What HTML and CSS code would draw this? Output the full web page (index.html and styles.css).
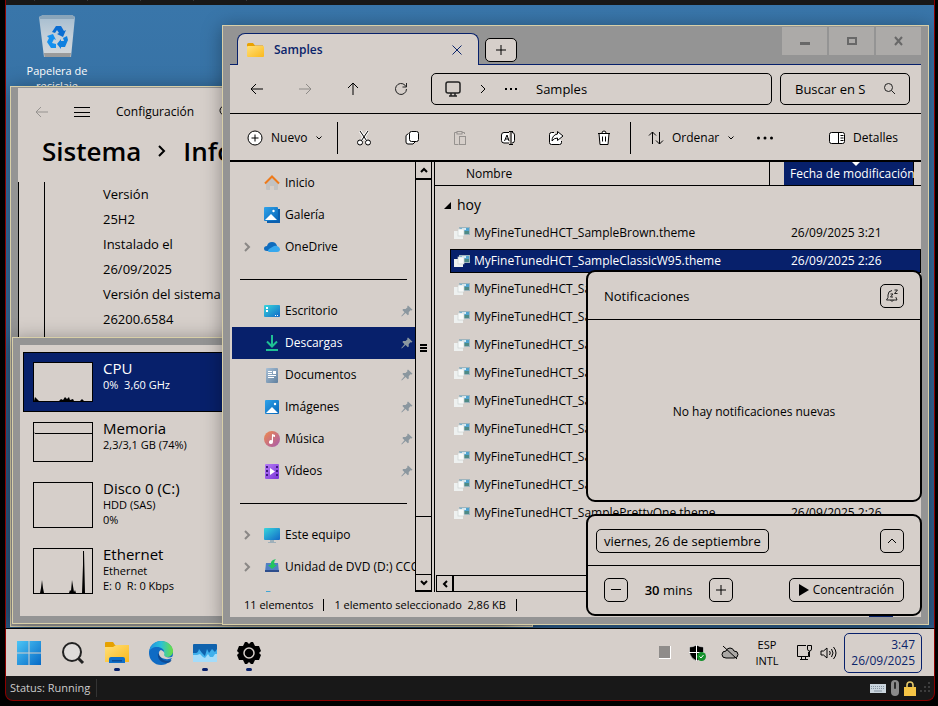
FILE: index.html
```html
<!DOCTYPE html>
<html lang="es">
<head>
    <meta charset="UTF-8">
    <meta name="viewport" content="width=device-width, initial-scale=1.0">
    <title>Escritorio</title>
    <link rel="stylesheet" href="styles.css">
</head>
<body>
    <!-- Shared icons -->
    <svg class="defs" width="0" height="0">
        <defs>
            <symbol id="chev-right" viewBox="0 0 8 12"><path d="M2 2l4 4-4 4" fill="none" stroke="currentColor" stroke-width="2"/></symbol>
            <symbol id="chev-down" viewBox="0 0 8 8"><path d="M1.500 2.500L4 5l2.500-2.500" fill="none" stroke="currentColor"/></symbol>
            <symbol id="pin" viewBox="0 0 12 12"><path d="M7 .5l4.500 4.200-1 .8-1-.2-1.800 2 .1 2.200-1 .8-2.200-2.200L.8 11.500l-.5-.4 3.200-3.900L1.400 5l.8-1 2.400.1L6.500 2.300 6.200 1.200z" fill="#8b979f"/></symbol>
            <symbol id="theme" viewBox="0 0 16 14">
                <rect x="5" y="1" width="11" height="8" fill="#9db4bd"/>
                <rect x="6" y="2" width="9" height="3" fill="#4fa3cf"/>
                <rect x="6" y="5" width="9" height="3" fill="#4d8a86"/>
                <path d="M8 2h4v2H8z" fill="#d3ecf7"/>
                <rect x="0" y="5" width="9" height="8" fill="#eef1f0"/>
                <rect x="4" y="3" width="6" height="7" fill="#f8faf9" stroke="#ccd2d2" stroke-width=".7"/>
            </symbol>
            <linearGradient id="gBlue" x1="0" y1="0" x2="1" y2="1"><stop offset="0" stop-color="#2fa3ea"/><stop offset="1" stop-color="#0765b8"/></linearGradient>
            <linearGradient id="gCyan" x1="0" y1="0" x2="1" y2="1"><stop offset="0" stop-color="#37d6dc"/><stop offset="1" stop-color="#1268c8"/></linearGradient>
            <linearGradient id="gFolder" x1="0" y1="0" x2="1" y2="1"><stop offset="0" stop-color="#ffe07a"/><stop offset="1" stop-color="#fbb91c"/></linearGradient>
            <linearGradient id="gWin" x1="0" y1="0" x2="1" y2="1"><stop offset="0" stop-color="#4cc5f5"/><stop offset="1" stop-color="#0669c6"/></linearGradient>
            <linearGradient id="gMusic" x1="0" y1="0" x2="1" y2="1"><stop offset="0" stop-color="#f08a4b"/><stop offset="1" stop-color="#a65bb0"/></linearGradient>
            <linearGradient id="gVideo" x1="0" y1="0" x2="1" y2="1"><stop offset="0" stop-color="#b57bf5"/><stop offset="1" stop-color="#7a35d8"/></linearGradient>
            <linearGradient id="gDoc" x1="0" y1="0" x2="1" y2="1"><stop offset="0" stop-color="#a9c0d6"/><stop offset="1" stop-color="#5f7f9e"/></linearGradient>
            <linearGradient id="gBin" x1="0" y1="0" x2="0" y2="1"><stop offset="0" stop-color="#a4bccf"/><stop offset=".5" stop-color="#c3cfd9"/><stop offset="1" stop-color="#d4d7da"/></linearGradient>
            <linearGradient id="gEdge" x1="0" y1="0" x2="1" y2="0"><stop offset="0" stop-color="#1d8fe0"/><stop offset=".5" stop-color="#2bc0d8"/><stop offset="1" stop-color="#6be03f"/></linearGradient>
        </defs>
    </svg>

    <div class="viewer">
        <div class="viewer-top"><i></i><i></i><i></i><i></i><i></i></div>

        <main class="desktop">
            <div class="desktop-icon">
                <svg width="38" height="44" viewBox="0 0 38 44">
                    <path d="M1 3l4-2h29l3 2-4 40H6z" fill="url(#gBin)"/>
                    <path d="M1 3l4-2h29l3 2-1 2H2z" fill="#8aa5ba"/>
                    <path d="M6 39h27l-.5 4H6.500z" fill="#9b9b9b"/>
                    <path d="M14 18l4-6h5l3 5 2-1-3 7-6-3 2-1-2-3-2 3z" fill="#0a6dd2"/>
                    <path d="M9 22l6-2 3 6-2-1-2 4 4 1v4h-5l-4-6 2-4z" fill="#1590ef"/>
                    <path d="M25 24l4-2 1 4-3 7h-4v2l-4-5 4-5v2h3z" fill="#0f80e0"/>
                </svg>
                <span>Papelera de reciclaje</span>
            </div>

            <!-- Settings -->
            <section class="window win-settings">
                <div class="settings-bar">
                    <button class="flat" aria-label="Atrás"><svg width="14" height="12" viewBox="0 0 14 12" fill="none" stroke="#969390"><path d="M13 6H1M6 1L1 6l5 5"/></svg></button>
                    <button class="flat" aria-label="Menú"><svg width="16" height="12" viewBox="0 0 16 12" stroke="#000"><path d="M0 1.500h16M0 6.500h16M0 10.500h16"/></svg></button>
                    <span>Configuración</span>
                    <button class="flat settings-search" aria-label="Buscar"><svg width="14" height="14" viewBox="0 0 14 14" fill="none" stroke="#000"><circle cx="5.500" cy="5.500" r="4.500"/><path d="M9 9l4 4"/></svg></button>
                </div>
                <h1 class="crumbs"><span>Sistema</span><svg width="10" height="14" viewBox="0 0 10 14" fill="none" stroke="#000" stroke-width="2"><path d="M2 2l5 5-5 5"/></svg><span>Información</span></h1>
                <div class="spec-card">
                    <dl>
                        <dt>Versión</dt><dd>25H2</dd>
                        <dt>Instalado el</dt><dd>26/09/2025</dd>
                        <dt>Versión del sistema</dt><dd>26200.6584</dd>
                    </dl>
                </div>
            </section>

            <!-- Task manager -->
            <section class="window win-tasks">
                <ul class="perf">
                    <li class="on">
                        <svg width="60" height="40" viewBox="0 0 60 40"><rect x=".5" y=".5" width="59" height="39"/><path class="ink" d="M1 39l1-4 2 2 2 2h20l2-2 2 1 2-3 2 2 2-2 1 3 3-1 1 2h6l2-2 2 2z"/></svg>
                        <div><b>CPU</b><span>0%&nbsp; 3,60 GHz</span></div>
                    </li>
                    <li>
                        <svg width="60" height="40" viewBox="0 0 60 40"><rect x=".5" y=".5" width="59" height="39"/><path d="M1 10.500l1 1h57"/></svg>
                        <div><b>Memoria</b><span>2,3/3,1 GB (74%)</span></div>
                    </li>
                    <li>
                        <svg width="60" height="46" viewBox="0 0 60 46"><rect x=".5" y=".5" width="59" height="45"/></svg>
                        <div><b>Disco 0 (C:)</b><span>HDD (SAS)</span><span>0%</span></div>
                    </li>
                    <li>
                        <svg width="60" height="46" viewBox="0 0 60 46"><rect x=".5" y=".5" width="59" height="45"/><path class="ink" d="M7 45l1-5 1-8 1 8 1 5zM36 45l1-3 1 1 1-11 2 12 1-2 1 3zM49 45l1-28V3h1l1 42z"/></svg>
                        <div><b>Ethernet</b><span>Ethernet</span><span>E: 0&nbsp; R: 0 Kbps</span></div>
                    </li>
                </ul>
            </section>

            <!-- File explorer -->
            <section class="window win-explorer">
                <header class="titlebar">
                    <div class="tab">
                        <svg width="17" height="14" viewBox="0 0 17 14"><path d="M0 1.500Q0 0 1.500 0H6l2 2.500H16V6H0z" fill="#e9a100"/><rect y="3" width="17" height="11" rx="1" fill="url(#gFolder)"/></svg>
                        <strong>Samples</strong>
                        <button class="flat" aria-label="Cerrar pestaña"><svg width="10" height="10" viewBox="0 0 10 10" stroke="#0a246a"><path d="M.5.5l9 9M9.500.5l-9 9"/></svg></button>
                    </div>
                    <button class="new-tab" aria-label="Nueva pestaña"><svg width="10" height="10" viewBox="0 0 10 10" stroke="#000"><path d="M5 0v10M0 5h10"/></svg></button>
                    <div class="caption-buttons">
                        <button aria-label="Minimizar"><svg width="12" height="10" viewBox="0 0 12 10"><path d="M1 6h10v3H1z" fill="#686868"/></svg></button>
                        <button aria-label="Maximizar"><svg width="12" height="10" viewBox="0 0 12 10"><rect x="2" y="2" width="8" height="6" fill="none" stroke="#686868" stroke-width="2"/></svg></button>
                        <button aria-label="Cerrar"><svg width="12" height="10" viewBox="0 0 12 10"><path d="M2 1l7 8M9 1L2 9" stroke="#686868" stroke-width="2"/></svg></button>
                    </div>
                </header>

                <nav class="navbar">
                    <button class="nav-btn" aria-label="Atrás"><svg width="14" height="12" viewBox="0 0 14 12" fill="none" stroke="#000"><path d="M13 6H1M6 1L1 6l5 5"/></svg></button>
                    <button class="nav-btn" aria-label="Adelante"><svg width="14" height="12" viewBox="0 0 14 12" fill="none" stroke="#8d8a87"><path d="M1 6h12M8 1l5 5-5 5"/></svg></button>
                    <button class="nav-btn" aria-label="Subir"><svg width="12" height="14" viewBox="0 0 12 14" fill="none" stroke="#000"><path d="M6 13V1M1 6l5-5 5 5"/></svg></button>
                    <button class="nav-btn" aria-label="Actualizar"><svg width="14" height="14" viewBox="0 0 14 14" fill="none" stroke="#222"><path d="M12.500 7A5.500 5.500 0 1 1 11 3.200L12.500 5M12.500 1v4h-4"/></svg></button>
                    <div class="address">
                        <svg width="16" height="16" viewBox="0 0 16 16" fill="none" stroke="#222" stroke-width="1.500"><rect x="1" y="1" width="14" height="11" rx="2"/><path d="M4 15h8M6 12v3M10 12v3"/></svg>
                        <svg width="6" height="10" viewBox="0 0 6 10" fill="none" stroke="#000"><path d="M1 1l4 4-4 4"/></svg>
                        <svg width="12" height="3" viewBox="0 0 12 3"><path d="M0 0h2v2H0zM5 0h2v2H5zM10 0h2v2h-2z"/></svg>
                        <a href="#">Samples</a>
                    </div>
                    <label class="search">
                        <input type="text" value="Buscar en S" aria-label="Buscar en Samples">
                        <svg width="12" height="12" viewBox="0 0 12 12" fill="none" stroke="#222"><circle cx="4.500" cy="4.500" r="4"/><path d="M7.500 7.500L11 11"/></svg>
                    </label>
                </nav>

                <div class="commands">
                    <button class="cmd cmd-new">
                        <svg width="16" height="16" viewBox="0 0 16 16" fill="#fff" stroke="#000"><circle cx="8" cy="8" r="7"/><path d="M8 4.500v7M4.500 8h7"/></svg>
                        Nuevo
                        <svg width="8" height="8"><use href="#chev-down"/></svg>
                    </button>
                    <i class="sep"></i>
                    <button class="cmd-icon" aria-label="Cortar"><svg width="16" height="16" viewBox="0 0 16 16" fill="#fff" stroke="#000"><path d="M4 1l6.500 9.500M12 1L5.500 10.500" stroke="#fff" stroke-width="3"/><path d="M4 1l6.500 9.500M12 1L5.500 10.500"/><circle cx="4" cy="12.500" r="2.500"/><circle cx="12" cy="12.500" r="2.500"/></svg></button>
                    <button class="cmd-icon" aria-label="Copiar"><svg width="16" height="16" viewBox="0 0 16 16" fill="#fff" stroke="#000"><path d="M4.500 3.500L2 5.500V12q0 2 2 2h5l2-2"/><rect x="5.500" y="1.500" width="9" height="10" rx="2"/></svg></button>
                    <button class="cmd-icon" aria-label="Pegar"><svg width="16" height="16" viewBox="0 0 16 16" fill="none" stroke="#96928f"><path d="M6.500 14.500h-4v-12H5M10 2.500h2.500V4"/><rect x="5" y="1.500" width="5" height="2.500"/><rect x="7.500" y="6.500" width="6" height="8"/></svg></button>
                    <button class="cmd-icon" aria-label="Cambiar nombre"><svg width="16" height="16" viewBox="0 0 16 16" fill="#fff" stroke="#000"><path d="M9 2.500H4q-2.500 0-2.500 2.500v5.500Q1.500 13 4 13h5M12 2.500q2.500 0 2.500 2.500v5.500q0 2.500-2.500 2.500"/><path d="M4.500 11l2.500-6 2 6M5.500 9h3M9 1.500h4M9 14.500h4M11 1.500v13" fill="none"/></svg></button>
                    <button class="cmd-icon" aria-label="Compartir"><svg width="16" height="16" viewBox="0 0 16 16" fill="#fff" stroke="#000"><path d="M6 2.500H3.500q-2 0-2 2v8q0 2 2 2h8q2 0 2-2V11"/><path d="M9.500 1.500L15 6l-5.500 4.500V8Q6 8 4 11q0-6 5.500-7z"/></svg></button>
                    <button class="cmd-icon" aria-label="Eliminar"><svg width="16" height="16" viewBox="0 0 16 16" fill="#fff" stroke="#000"><path d="M3 3.500l1 11h8l1-11M2 3.500h12M6 3q0-2 2-2t2 2M6.500 6.500v5M9.500 6.500v5"/></svg></button>
                    <i class="sep"></i>
                    <button class="cmd cmd-sort">
                        <svg width="16" height="14" viewBox="0 0 16 14" fill="none" stroke="#000"><path d="M4.500 13V1M1 4.500L4.500 1 8 4.500M11.500 1v12M8 9.500l3.500 3.500L15 9.500"/></svg>
                        Ordenar
                        <svg width="8" height="8"><use href="#chev-down"/></svg>
                    </button>
                    <button class="cmd-more" aria-label="Más"><svg width="18" height="4" viewBox="0 0 18 4"><circle cx="2.500" cy="2" r="1.500"/><circle cx="9" cy="2" r="1.500"/><circle cx="15.500" cy="2" r="1.500"/></svg></button>
                    <button class="cmd cmd-details">
                        <svg width="16" height="14" viewBox="0 0 16 14" fill="#fff" stroke="#000"><rect x=".5" y="1.500" width="15" height="11" rx="2"/><path d="M9.500 1.500v11M11.500 4.500h3M11.500 7h3M11.500 9.500h3"/></svg>
                        Detalles
                    </button>
                </div>

                <div class="panes">
                    <ul class="tree">
                        <li><i class="tw"></i><svg width="16" height="16" viewBox="0 0 16 16"><path d="M2 8l6-6 6 6v6q0 1-1 1h-3v-4H6v4H3q-1 0-1-1z" fill="#c2c2c2"/><path d="M1 8.500l7-7 7 7" fill="none" stroke="#ee7a1a" stroke-width="2"/></svg><span>Inicio</span></li>
                        <li><i class="tw"></i><svg width="16" height="16" viewBox="0 0 16 16"><path d="M3 2h13v14H3z" fill="#0b5fae"/><rect width="14" height="14" rx="1" fill="url(#gBlue)"/><path d="M1 13l6-6 6 6z" fill="#fff"/><circle cx="9.500" cy="4" r="1.200" fill="#fff"/></svg><span>Galería</span></li>
                        <li><svg class="tw" width="8" height="12"><use href="#chev-right"/></svg><svg width="16" height="16" viewBox="0 0 16 16"><path d="M3 7q1-4 5-4t5 4l-6 5H3q-3 0-3-2.500T3 7z" fill="#0f6cbd"/><path d="M5 13q-2-1 0-3l5-3q4-1 6 3 0 3-3 3z" fill="#36a8ee"/></svg><span>OneDrive</span></li>
                        <li class="rule"><hr></li>
                        <li><i class="tw"></i><svg width="16" height="16" viewBox="0 0 16 16"><rect y="2" width="16" height="12" rx="1" fill="url(#gCyan)"/><path d="M2 4h2v2H2zM2 7h2v2H2zM11 12h1v1h-1zM13 12h1v1h-1z" fill="#fff"/></svg><span>Escritorio</span><svg class="pin" width="12" height="12"><use href="#pin"/></svg></li>
                        <li class="on"><i class="tw"></i><svg width="16" height="16" viewBox="0 0 16 16" fill="none" stroke="#1fbf94" stroke-width="2"><path d="M8 0v11M3 6.500l5 5 5-5M2 15h12"/></svg><span>Descargas</span><svg class="pin" width="12" height="12"><use href="#pin"/></svg></li>
                        <li><i class="tw"></i><svg width="16" height="16" viewBox="0 0 16 16"><rect x="2" y="1" width="12" height="15" rx="1" fill="url(#gDoc)"/><path d="M4 4h4v1H4zM4 6h4v1H4zM9 4h3v3H9zM4 8h8v1H4zM4 10h6v1H4z" fill="#fff"/></svg><span>Documentos</span><svg class="pin" width="12" height="12"><use href="#pin"/></svg></li>
                        <li><i class="tw"></i><svg width="16" height="16" viewBox="0 0 16 16"><rect x="1" y="1" width="14" height="14" rx="1" fill="url(#gBlue)"/><path d="M2 14l6-6 6 6z" fill="#fff"/><circle cx="11" cy="5" r="1.200" fill="#fff"/></svg><span>Imágenes</span><svg class="pin" width="12" height="12"><use href="#pin"/></svg></li>
                        <li><i class="tw"></i><svg width="16" height="16" viewBox="0 0 16 16"><circle cx="8" cy="8" r="8" fill="url(#gMusic)"/><path d="M8 3l3 1v2L9 5.500V11a2 2 0 1 1-1.200-1.800z" fill="#fff"/></svg><span>Música</span><svg class="pin" width="12" height="12"><use href="#pin"/></svg></li>
                        <li><i class="tw"></i><svg width="16" height="16" viewBox="0 0 16 16"><rect x="1" y="1" width="14" height="15" rx="1" fill="url(#gVideo)"/><path d="M2 3h2v2H2zM2 7h2v2H2zM2 11h2v2H2zM12 3h2v2h-2zM12 7h2v2h-2zM12 11h2v2h-2z" fill="#3c1a80"/><path d="M6 5l5 3.500L6 12z" fill="#fff"/></svg><span>Vídeos</span><svg class="pin" width="12" height="12"><use href="#pin"/></svg></li>
                        <li class="rule"><hr></li>
                        <li><svg class="tw" width="8" height="12"><use href="#chev-right"/></svg><svg width="16" height="16" viewBox="0 0 16 16"><rect y="1" width="16" height="12" rx="1" fill="url(#gCyan)"/><path d="M6 13h4v2h2v1H4v-1h2z" fill="#9fb0ba"/></svg><span>Este equipo</span></li>
                        <li><svg class="tw" width="8" height="12"><use href="#chev-right"/></svg><svg width="16" height="16" viewBox="0 0 16 16"><path d="M2 4h12l1 9H1z" fill="#4f7fc4"/><path d="M1 11h14v2H1z" fill="#2d4d8c"/><path d="M9 1l3-1q-3 3-1 6h2l-5 4-4-4h3q-1-3 2-5z" fill="#22c55e"/></svg><span>Unidad de DVD (D:) CCC</span></li>
                        <li><i class="tw"></i><svg width="16" height="16" viewBox="0 0 16 16"><path d="M2 0h4l2 2H2z" fill="#3fa6d6"/></svg></li>
                    </ul>

                    <div class="vscroll">
                        <button aria-label="Subir"><svg width="8" height="6" viewBox="0 0 8 6" fill="none" stroke="#000" stroke-width="2"><path d="M1 5l3-3 3 3"/></svg></button>
                        <div class="thumb"><svg width="7" height="8" viewBox="0 0 7 8"><path d="M0 0h7v2H0zM0 3h7v2H0zM0 6h7v2H0z"/></svg></div>
                        <div class="track"></div>
                        <button aria-label="Bajar"><svg width="8" height="6" viewBox="0 0 8 6" fill="none" stroke="#000" stroke-width="2"><path d="M1 1l3 3 3-3"/></svg></button>
                    </div>

                    <div class="list-pane">
                        <table class="files">
                            <thead>
                                <tr><th>Nombre</th><th class="sorted">Fecha de modificación</th></tr>
                            </thead>
                            <tbody>
                                <tr class="group"><th colspan="2"><svg width="7" height="7" viewBox="0 0 7 7"><path d="M7 0v7H0z"/></svg>hoy</th></tr>
                                <tr><td><svg width="16" height="14"><use href="#theme"/></svg>MyFineTunedHCT_SampleBrown.theme</td><td>26/09/2025 3:21</td></tr>
                                <tr class="on"><td><svg width="16" height="14"><use href="#theme"/></svg>MyFineTunedHCT_SampleClassicW95.theme</td><td>26/09/2025 2:26</td></tr>
                                <tr><td><svg width="16" height="14"><use href="#theme"/></svg>MyFineTunedHCT_Sample.theme</td><td>26/09/2025 2:26</td></tr>
                                <tr><td><svg width="16" height="14"><use href="#theme"/></svg>MyFineTunedHCT_Sample.theme</td><td>26/09/2025 2:26</td></tr>
                                <tr><td><svg width="16" height="14"><use href="#theme"/></svg>MyFineTunedHCT_Sample.theme</td><td>26/09/2025 2:26</td></tr>
                                <tr><td><svg width="16" height="14"><use href="#theme"/></svg>MyFineTunedHCT_Sample.theme</td><td>26/09/2025 2:26</td></tr>
                                <tr><td><svg width="16" height="14"><use href="#theme"/></svg>MyFineTunedHCT_Sample.theme</td><td>26/09/2025 2:26</td></tr>
                                <tr><td><svg width="16" height="14"><use href="#theme"/></svg>MyFineTunedHCT_Sample.theme</td><td>26/09/2025 2:26</td></tr>
                                <tr><td><svg width="16" height="14"><use href="#theme"/></svg>MyFineTunedHCT_Sample.theme</td><td>26/09/2025 2:26</td></tr>
                                <tr><td><svg width="16" height="14"><use href="#theme"/></svg>MyFineTunedHCT_Sample.theme</td><td>26/09/2025 2:26</td></tr>
                                <tr><td><svg width="16" height="14"><use href="#theme"/></svg>MyFineTunedHCT_SamplePrettyOne.theme</td><td>26/09/2025 2:26</td></tr>
                            </tbody>
                        </table>
                        <div class="hscroll">
                            <button aria-label="Izquierda"><svg width="6" height="8" viewBox="0 0 6 8" fill="none" stroke="#000" stroke-width="2"><path d="M5 1L2 4l3 3"/></svg></button>
                        </div>
                    </div>
                </div>

                <footer class="statusbar">
                    <span>11 elementos</span><i></i><span>1 elemento seleccionado&nbsp; 2,86 KB</span><i></i>
                    <button class="view-toggle" aria-label="Vista de detalles"></button>
                </footer>
            </section>

            <!-- Notification center -->
            <aside class="flyouts">
                <section class="flyout flyout-notes">
                    <header>
                        <h2>Notificaciones</h2>
                        <button class="box-btn" aria-label="No molestar"><svg width="14" height="14" viewBox="0 0 14 14" fill="none" stroke="#222"><path d="M7 1.500Q3 2 3 6v2.500L1.500 11H12l-1-2.500V8M5.500 11q1.500 3 3 0M5.500 5h2.500L5.500 8H8M9.500 1h3l-3 3.500h3"/></svg></button>
                    </header>
                    <p>No hay notificaciones nuevas</p>
                </section>
                <section class="flyout flyout-focus">
                    <header>
                        <button class="box-btn date-btn">viernes, 26 de septiembre</button>
                        <button class="box-btn" aria-label="Expandir"><svg width="10" height="6" viewBox="0 0 10 6" fill="none" stroke="#000"><path d="M1 5l4-4 4 4"/></svg></button>
                    </header>
                    <div class="focus-row">
                        <button class="box-btn" aria-label="Menos"><svg width="10" height="10" viewBox="0 0 10 10" stroke="#000"><path d="M0 4.500h10"/></svg></button>
                        <span class="mins"><b>30</b> mins</span>
                        <button class="box-btn" aria-label="Más"><svg width="10" height="10" viewBox="0 0 10 10" stroke="#000"><path d="M0 5h10M5 0v10"/></svg></button>
                        <button class="box-btn focus-btn"><svg width="10" height="12" viewBox="0 0 10 12"><path d="M0 0l10 6-10 6z"/></svg>Concentración</button>
                    </div>
                </section>
            </aside>
        </main>

        <div class="taskbar">
            <button class="app" aria-label="Inicio"><svg width="24" height="24" viewBox="0 0 24 24"><path d="M0 0h24v24H0z" fill="url(#gWin)"/><path d="M12 0v24M0 12h24" stroke="#d6cfca"/></svg></button>
            <button class="app" aria-label="Buscar"><svg width="24" height="24" viewBox="0 0 24 24" fill="none" stroke="#222" stroke-width="2"><circle cx="11" cy="11" r="9" fill="#dfdcda"/><path d="M17.500 17.500L22 22" stroke-width="3"/></svg></button>
            <button class="app running" aria-label="Explorador"><svg width="24" height="24" viewBox="0 0 24 24"><path d="M0 2q0-1 1-1h7l2 3h13q1 0 1 1v4H0z" fill="#e6a100"/><path d="M0 6h8l3-2h13v17H0z" fill="url(#gFolder)"/><path d="M4 22v-4q0-2 2-2h12q2 0 2 2v4z" fill="#0f6fc9"/><path d="M7 19h10v1.500H7z" fill="#0a4b95"/></svg></button>
            <button class="app" aria-label="Edge"><svg width="24" height="24" viewBox="0 0 24 24"><circle cx="12" cy="12" r="12" fill="#0f6bc4"/><path d="M0 11C1 4 6 0 12 0c7 0 12 5 12 10 0 4-3 6-6 6-3 0-4-1-3-3 1-5-3-7-7-7-4 0-7 2-8 5z" fill="url(#gEdge)"/><path d="M9 12c-1 6 3 10 9 10 2 0 4-1 4.500-3-5 2-10 0-11-4z" fill="#0d4a94"/><path d="M12 9c-3 1-3 6 1 8 3 1.500 7 1.500 10 0l2 3V15c-4 2-9 2-10-1 1-2 0-4-3-5z" fill="#d6cfca"/></svg></button>
            <button class="app running" aria-label="Administrador de tareas"><svg width="24" height="18" viewBox="0 0 24 18"><rect width="24" height="18" rx="1" fill="#0f62ad"/><path d="M0 9h3q2 0 3-4l3 4 3 3 2-7 2 4 3-4 3 3 2-3v13H0z" fill="#3fb0ec"/><path d="M0 11h4l3-1 3 3 2 1 3-4 2 3h3l2-3h2v8H0z" fill="#a4dcfa"/></svg></button>
            <button class="app running" aria-label="Configuración"><svg width="24" height="24" viewBox="0 0 24 24"><path d="M8 1h2l2 2 2-2h2l2 4h4l2 5-2 2 2 2-2 5h-4l-2 4h-2l-2-2-2 2H8l-2-4H2l-2-5 2-2-2-2 2-5h4z"/><circle cx="12" cy="12" r="5" fill="none" stroke="#d6cfca" stroke-width="1.500"/></svg></button>

            <div class="tray">
                <svg class="tray-box" width="12" height="13" viewBox="0 0 12 13"><path d="M0 0h12v13H0z" fill="#fff"/><path d="M0 0h11v12H0z" fill="#8f8c8a"/></svg>
                <svg width="18" height="16" viewBox="0 0 18 16"><path d="M7.500 0q3 2 7 2v6q-1 5-7 8-6-3-7-8V2q4 0 7-2z" stroke="#fff" stroke-width=".5"/><path d="M7.500 0v16M0 7.500h15" stroke="#fff"/><circle cx="12.500" cy="11.500" r="4.500" fill="#14912c"/><path d="M10.500 11.500l1.500 1.500 2.500-3" fill="none" stroke="#fff"/></svg>
                <svg width="18" height="14" viewBox="0 0 18 14" fill="#aaa7a4" stroke="#000"><path d="M5 12Q1 12 1 8.500T5 5q1-3 4-3t4 3q4 0 4 3.500T13 12z"/><path d="M2 0l14 13"/></svg>
                <span class="lang">ESP<br>INTL</span>
                <svg width="17" height="17" viewBox="0 0 17 17" fill="none" stroke="#000"><path d="M10 1.500H1.500v11h11V8M4 15.500h8M5.500 13v2M9.500 13v2M13.500 7v6M11.500 1.500h4V5q0 2-2 2t-2-2z"/></svg>
                <svg width="17" height="14" viewBox="0 0 17 14" fill="none" stroke="#000"><path d="M1 5h2.500L7 2v10L3.500 9H1zM9.500 5q1.500 2 0 4M11.500 3q3 4 0 8M13.500 1q5 6 0 12"/></svg>
                <button class="clock">3:47<br>26/09/2025</button>
            </div>
        </div>

        <footer class="viewer-status">
            <span>Status: Running</span>
            <div class="devices">
                <svg width="16" height="9" viewBox="0 0 16 9"><rect width="16" height="9" fill="#c9d4dc"/><path d="M1 2.500h14M1 4.500h14" stroke="#8593a0" stroke-dasharray="1 1"/><path d="M4 7h8" stroke="#8593a0"/></svg>
                <svg width="10" height="16" viewBox="0 0 10 16"><rect x="1" width="8" height="16" rx="4" fill="#8b8b8b"/><rect x="4" y="2" width="2" height="7" rx="1" fill="#2b2b2b"/></svg>
                <svg width="12" height="15" viewBox="0 0 12 15"><path d="M3 7V4q0-3 3-3t3 3v3" fill="none" stroke="#e5c96a" stroke-width="1.600"/><rect y="6" width="12" height="9" fill="#f4c445"/></svg>
                <svg width="12" height="12" viewBox="0 0 12 12" fill="#3c3c3c"><path d="M8 0h2v2H8zM4 4h2v2H4zM8 4h2v2H8zM0 8h2v2H0zM4 8h2v2H4zM8 8h2v2H8z"/></svg>
            </div>
        </footer>
    </div>
</body>
</html>
```
FILE: styles.css
```css
* { box-sizing: border-box; }
body {
    margin: 0;
    background: #000;
    color: #000;
    font-family: "Open Sans", "Noto Sans", sans-serif;
    font-size: 12px;
    line-height: 16px;
}
button { font: inherit; color: inherit; padding: 0; border: 0; background: none; display: flex; align-items: center; justify-content: center; }
svg { display: block; flex: none; }
ul, dl, dd, h1, h2, p { margin: 0; padding: 0; }
ul { list-style: none; }
.defs { position: absolute; }

/* Viewer frame */
.viewer { height: 100vh; padding: 0 3px 5px 5px; display: flex; flex-direction: column; }
.viewer > * { border-left: 1px solid #8b0000; border-right: 1px solid #8b0000; }
.viewer-top { height: 5px; flex: none; background: #181818; display: flex; gap: 52px; padding-left: 28px; }
.viewer-top i { width: 1px; height: 1px; background: #3a3a3a; }
.viewer-status { height: 25px; flex: none; background: #181818; color: #ccc; border-bottom: 1px solid #8b0000; border-radius: 0 0 8px 8px; display: flex; align-items: center; justify-content: space-between; }
.viewer-status span { padding: 1px 6px 1px 4px; border-right: 1px solid #333; font-size: 11px; }
.devices { display: flex; align-items: center; gap: 4px; padding-right: 2px; }

/* Desktop and windows */
.desktop { flex: 1; min-height: 0; position: relative; overflow: hidden; background: linear-gradient(#3976aa, #2d5c89); }
.desktop-icon { position: absolute; left: 10px; top: 9px; width: 82px; display: flex; flex-direction: column; align-items: center; gap: 5px; text-align: center; color: #fff; font-size: 11px; line-height: 15px; }
.window { position: absolute; border: 1px solid #d8cfa8; background: #949494; overflow: hidden; box-shadow: 0 2px 18px rgba(0, 0, 0, 0.35); display: flex; flex-direction: column; }
.win-settings { left: 4px; top: 81px; width: 523px; bottom: 1px; padding: 1px 7px 7px; }
.win-tasks { left: 6px; top: 332px; width: 500px; bottom: 4px; padding: 7px; }
.win-explorer { left: 216px; right: 5px; top: 20px; bottom: 3px; padding: 0 7px 7px; }

/* Settings */
.settings-bar { background: #d6cfca; height: 46px; flex: none; padding: 2px 0 0 17px; display: flex; align-items: center; }
.settings-bar .flat:nth-child(2) { margin: 0 26px 0 25px; }
.settings-search { margin-left: 25px; }
.crumbs { background: #d6cfca; height: 48px; flex: none; padding: 0 0 14px 24px; display: flex; align-items: center; gap: 16px; font-size: 26px; line-height: 34px; font-weight: 600; }
.spec-card { background: #d6cfca; flex: 1; border-left: 1px solid #000; padding-left: 25px; }
.spec-card dl { border-left: 1px solid #000; padding-left: 58px; height: 100%; font-size: 13px; line-height: 25px; }

/* Task manager */
.perf { background: #d6cfca; flex: 1; padding: 7px 3px; }
.perf li { padding: 10px; display: flex; gap: 10px; border: 0 solid #000; }
.perf li.on { height: 60px; padding: 9px; border-width: 1px; background: #07206b; color: #fff; }
.perf rect { fill: #d6cfca; stroke: #000; }
.perf path { fill: none; stroke: #000; }
.perf .ink { fill: #000; stroke-width: 0; }
.perf b { display: block; font-size: 15px; font-weight: 400; line-height: 18px; margin-top: -3px; }
.perf span { display: block; font-size: 11px; line-height: 15px; }

/* Explorer title bar */
.titlebar { flex: none; height: 39px; display: flex; border-bottom: 1px solid #07206b; padding-left: 7px; }
.tab { width: 242px; height: 32px; margin-top: 7px; padding: 0 16px 0 9px; display: flex; align-items: center; gap: 10px; background: #d6cfca; border: 1px solid #07206b; border-bottom: 0; border-radius: 8px 8px 0 0; color: #0a246a; }
.tab strong { flex: 1; font-weight: 600; }
.new-tab { width: 32px; height: 24px; margin: 12px 0 0 6px; border: 1px solid #000; border-radius: 5px; background: #d6cfca; }
.caption-buttons { margin: 1px 0 0 auto; display: flex; gap: 2px; height: 28px; }
.caption-buttons button { width: 45px; background: #acaaa8; }

/* Navigation bar */
.navbar { flex: none; height: 49px; display: flex; align-items: center; background: #d6cfca; border-bottom: 1px solid #000; padding: 0 11px 0 3px; }
.nav-btn { width: 48px; height: 32px; flex: none; }
.address { flex: 1; height: 32px; margin: 0 8px 0 6px; padding: 0 13px; display: flex; align-items: center; gap: 19px; border: 1px solid #000; border-radius: 5px; font-size: 13px; }
.address a { color: inherit; text-decoration: none; }
.search { width: 130px; height: 32px; padding: 0 13px 0 14px; display: flex; align-items: center; gap: 8px; border: 1px solid #000; border-radius: 5px; }
.search input { flex: 1; min-width: 0; padding: 0; border: 0; outline: 0; background: none; font: inherit; font-size: 13px; color: #000; }

/* Command bar */
.commands { flex: none; height: 48px; display: flex; align-items: center; background: #d6cfca; border-bottom: 2px solid #000; padding: 2px 23px 0 0; }
.cmd { height: 32px; gap: 8px; justify-content: flex-start; flex: none; }
.cmd-new { width: 107px; padding-left: 17px; }
.cmd-icon { width: 48px; height: 32px; flex: none; }
.commands .sep { width: 1px; height: 32px; background: #000; margin-right: 2px; }
.commands .cmd-icon + .sep { margin: 0 0 0 2px; }
.cmd-sort { width: 110px; padding-left: 17px; }
.cmd-more { width: 48px; height: 32px; }
.cmd-details { margin-left: auto; }

/* Panes */
.panes { flex: 1; min-height: 0; display: flex; background: #d6cfca; }
.tree { width: 185px; flex: none; padding: 5px 0 0 2px; overflow: hidden; }
.tree li { height: 32px; display: flex; align-items: center; padding-left: 11px; white-space: nowrap; }
.tree .tw { width: 8px; margin-right: 13px; flex: none; color: #8a8785; }
.tree span { margin-left: 5px; }
.tree .pin { margin: 0 2px 0 auto; }
.tree .on { background: #07206b; color: #fff; }
.tree .rule { padding: 0 8px; }
.tree hr { width: 100%; margin: 0; border: 0; border-top: 1px solid #000; }
.vscroll { width: 17px; flex: none; display: flex; flex-direction: column; border: 1px solid #000; border-top: 0; }
.vscroll button { height: 16px; flex: none; }
.thumb { flex: 1; display: flex; align-items: center; justify-content: center; border: solid #000; border-width: 2px 0 1px; }
.track { height: 58px; border-bottom: 1px solid #000; }
.vscroll button:last-child { border-bottom: 1px solid #000; }
.list-pane { flex: 1; min-width: 0; margin-left: 2px; border-left: 1px solid #000; display: flex; flex-direction: column; }

/* File table */
.files { flex: 1; min-height: 0; overflow: hidden; display: block; white-space: nowrap; }
.files thead, .files tbody { display: block; }
.files tr { display: grid; grid-template-columns: 1fr 136px; height: 24px; margin: 0 0 4px 15px; border: 1px solid transparent; }
.files td { padding: 0 0 0 3px; display: flex; align-items: center; gap: 4px; }
.files td + td { padding-left: 7px; }
.files thead tr { grid-template-columns: 1fr 130px; gap: 14px; margin: 0; padding-right: 7px; border: 0; border-bottom: 1px solid #000; }
.files thead th { padding: 0 0 0 31px; text-align: left; font-weight: 400; line-height: 23px; border-right: 1px solid #000; }
.files thead .sorted { position: relative; padding: 0 0 0 6px; background: #07206b; color: #fff; }
.sorted::before { content: ""; position: absolute; top: 0; left: 68px; border: 4px solid transparent; border-top-color: #fff; border-bottom: 0; }
.files .group { margin: 7px 0 4px 8px; display: block; }
.group th { display: flex; align-items: center; gap: 6px; padding: 0; font-size: 14px; line-height: 22px; font-weight: 400; }
.files tr.on { background: #07206b; color: #fff; border-color: #000; }
.hscroll { flex: none; height: 17px; margin-left: 1px; border: 1px solid #000; border-right: 0; display: flex; }
.hscroll button { width: 17px; border-right: 2px solid #000; }

.statusbar { flex: none; height: 25px; display: flex; align-items: center; gap: 10px; background: #d6cfca; padding: 0 28px 0 14px; font-size: 11px; }
.statusbar i { width: 1px; height: 12px; background: #000; }
.view-toggle { width: 24px; height: 25px; margin-left: auto; background: #07206b; }

/* Flyouts over the desktop */
.flyouts { position: absolute; right: 12px; bottom: 12px; width: 336px; display: flex; flex-direction: column; gap: 12px; }
.flyout { background: #d6cfca; border: 2px solid #000; border-radius: 9px; }
.flyout header { height: 48px; padding: 0 16px; display: flex; align-items: center; justify-content: space-between; border-bottom: 1px solid #000; }
.flyout h2 { font-size: 13px; font-weight: 400; }
.flyout p { height: 180px; padding-top: 4px; display: flex; align-items: center; justify-content: center; }
.box-btn { width: 24px; height: 24px; border: 1px solid #000; border-radius: 5px; }
.flyout-focus header { padding-left: 8px; height: 50px; }
.date-btn { width: auto; padding: 0 7px; font-size: 13px; }
.focus-row { height: 48px; padding: 0 16px; display: flex; align-items: center; }
.mins { width: 81px; text-align: center; font-size: 13px; }
.mins b { font-weight: 600; }
.focus-btn { width: auto; margin-left: auto; padding: 0 9px; gap: 4px; }

/* Taskbar */
.taskbar { height: 48px; flex: none; display: flex; align-items: center; background: #d6cfca; border-top: 1px solid #000; padding-left: 1px; }
.app { width: 44px; height: 47px; position: relative; }
.running::after { content: ""; position: absolute; left: 19px; bottom: 5px; width: 6px; height: 3px; border-radius: 2px; background: #07206b; }
.tray { margin-left: auto; padding-right: 12px; display: flex; align-items: center; }
.tray-box { margin-right: 18px; }
.tray svg + svg { margin-right: 14px; }
.lang { width: 28px; margin-right: 15px; text-align: center; font-size: 11px; }
.tray .lang + svg { margin-right: 7px; }
.tray .lang + svg + svg { margin-right: 7px; }
.clock { width: 78px; height: 40px; padding-right: 6px; justify-content: flex-end; text-align: right; border: 1px solid #07206b; border-radius: 5px; color: #0a246a; font-size: 12px; }
```
